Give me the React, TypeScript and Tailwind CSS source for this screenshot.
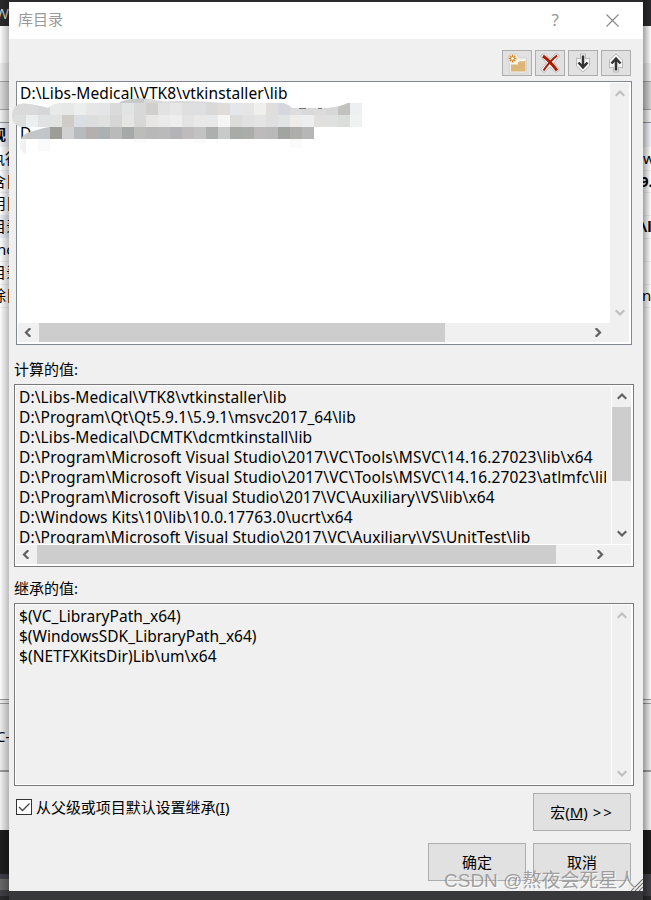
import { ReactNode } from "react";

type Line = { text: string; spacing: string };
type Band = { h: number; bg: string; line?: string; text?: string; bold?: boolean; left?: number; color?: string };

const computedValues: Line[] = [
  { text: "D:\\Libs-Medical\\VTK8\\vtkinstaller\\lib", spacing: "0.12px" },
  { text: "D:\\Program\\Qt\\Qt5.9.1\\5.9.1\\msvc2017_64\\lib", spacing: "0.07px" },
  { text: "D:\\Libs-Medical\\DCMTK\\dcmtkinstall\\lib", spacing: "0.12px" },
  { text: "D:\\Program\\Microsoft Visual Studio\\2017\\VC\\Tools\\MSVC\\14.16.27023\\lib\\x64", spacing: "0.155px" },
  { text: "D:\\Program\\Microsoft Visual Studio\\2017\\VC\\Tools\\MSVC\\14.16.27023\\atlmfc\\lib", spacing: "0.155px" },
  { text: "D:\\Program\\Microsoft Visual Studio\\2017\\VC\\Auxiliary\\VS\\lib\\x64", spacing: "0.09px" },
  { text: "D:\\Windows Kits\\10\\lib\\10.0.17763.0\\ucrt\\x64", spacing: "0.1px" },
  { text: "D:\\Program\\Microsoft Visual Studio\\2017\\VC\\Auxiliary\\VS\\UnitTest\\lib", spacing: "0.11px" },
];

const inheritedValues: Line[] = [
  { text: "$(VC_LibraryPath_x64)", spacing: "0.04px" },
  { text: "$(WindowsSDK_LibraryPath_x64)", spacing: "0px" },
  { text: "$(NETFXKitsDir)Lib\\um\\x64", spacing: "0.07px" },
];

const leftBands: Band[] = [
  { h: 26, bg: "#2b2b2d", text: "W", left: -5, color: "#d0d0d0" },
  { h: 37, bg: "#fbfbfb" },
  { h: 18, bg: "#ececec" },
  { h: 28, bg: "#dcdcdc", line: "#a5a5a5" },
  { h: 13, bg: "#f0f0f0", line: "#a5a5a5" },
  { h: 25, bg: "#eef0f6", line: "#8f959e", text: "观", bold: true, left: -9 },
  { h: 23, bg: "#fcfcfd", text: "执行", left: -10 },
  { h: 22, bg: "#fcfcfd", line: "#ededf2", text: "含目", left: -9 },
  { h: 23, bg: "#fcfcfd", line: "#ededf2", text: "用目", left: -9 },
  { h: 23, bg: "#e9ecf3", text: "目录", left: -9 },
  { h: 23, bg: "#fcfcfd", text: "nc", left: -3 },
  { h: 23, bg: "#fcfcfd", line: "#ededf2", text: "目录", left: -9 },
  { h: 23, bg: "#fcfcfd", line: "#ededf2", text: "除目", left: -9 },
  { h: 392, bg: "#fcfcfc", line: "#ededf2" },
  { h: 4, bg: "#f0f0f0", line: "#9c9c9c" },
  { h: 67, bg: "#ececec", line: "#9c9c9c", text: "C-", left: -4 },
  { h: 2, bg: "#9c9c9c" },
  { h: 58, bg: "#f0f0f0" },
  { h: 44, bg: "#1e1e1e" },
  { h: 5, bg: "#3f3f46" },
  { h: 11, bg: "#686868" },
  { h: 6, bg: "#3f3f46" },
  { h: 4, bg: "#2b2b2d" },
];

const rightBands: Band[] = [
  { h: 26, bg: "#2b2b2d" },
  { h: 37, bg: "#fbfbfb" },
  { h: 18, bg: "#ececec" },
  { h: 28, bg: "#d2d2d2", line: "#a5a5a5" },
  { h: 13, bg: "#f0f0f0", line: "#a5a5a5" },
  { h: 25, bg: "#eef0f6", line: "#8f959e" },
  { h: 23, bg: "#fcfcfd", text: "w", left: 0 },
  { h: 22, bg: "#fcfcfd", line: "#ededf2", text: "9.", bold: true, left: -3 },
  { h: 23, bg: "#fcfcfd", line: "#ededf2" },
  { h: 23, bg: "#fcfcfd", line: "#ededf2", text: "\\li", bold: true, left: -2 },
  { h: 23, bg: "#fcfcfd", line: "#ededf2" },
  { h: 23, bg: "#fcfcfd", line: "#ededf2" },
  { h: 23, bg: "#fcfcfd", line: "#ededf2", text: "n", left: -1 },
  { h: 392, bg: "#fcfcfc", line: "#ededf2" },
  { h: 4, bg: "#f0f0f0", line: "#9c9c9c" },
  { h: 67, bg: "#ececec", line: "#9c9c9c" },
  { h: 2, bg: "#9c9c9c" },
  { h: 58, bg: "#f0f0f0" },
  { h: 44, bg: "#1e1e1e" },
  { h: 22, bg: "#3f3f46" },
  { h: 4, bg: "#2b2b2d" },
];

function Strip(props: { bands: Band[]; shade: string }) {
  return (
    <div className="relative h-[900px] overflow-hidden">
      {props.bands.map((b, i) => (
        <div
          key={i}
          className={`flex items-center overflow-hidden whitespace-nowrap text-[15px] leading-none ${b.bold ? "font-bold" : ""}`}
          style={{ height: b.h, background: b.bg, boxShadow: b.line ? `inset 0 1px ${b.line}` : undefined, color: b.color }}
        >
          {b.text && <span style={{ marginLeft: b.left }}>{b.text}</span>}
        </div>
      ))}
      <div className={`absolute inset-0 ${props.shade}`} />
    </div>
  );
}

const chevrons = {
  up: "M0.7 6.800 L5 2.500 L9.300 6.800",
  down: "M0.7 2.200 L5 6.500 L9.300 2.200",
  left: "M7.300 0.2 L3 4.500 L7.300 8.800",
  right: "M2.700 0.2 L7 4.500 L2.700 8.800",
};

function Chevron(props: { dir: keyof typeof chevrons; disabled?: boolean }) {
  return (
    <svg width="10" height="9" viewBox="0 0 10 9" className="shrink-0">
      <path d={chevrons[props.dir]} fill="none" stroke={props.disabled ? "#bfbfbf" : "#606060"} strokeWidth="2.2" />
    </svg>
  );
}

function VScroll(props: { disabled?: boolean; thumb?: boolean }) {
  return (
    <div className="flex w-[19px] shrink-0 flex-col items-center bg-[#f0f0f0]">
      <div className="flex h-[21px] items-center"><Chevron dir="up" disabled={props.disabled} /></div>
      {props.thumb && <div className="h-[74px] w-full bg-[#cdcdcd]" />}
      <div className="mt-auto flex h-[21px] items-center"><Chevron dir="down" disabled={props.disabled} /></div>
    </div>
  );
}

function HScroll(props: { thumb: string; end: string }) {
  return (
    <div className="flex h-[19px] shrink-0 items-center bg-[#f0f0f0]">
      <div className="flex w-[21px] justify-center pr-px"><Chevron dir="left" /></div>
      <div className={`h-full bg-[#cdcdcd] ${props.thumb}`} />
      <div className={`ml-auto ${props.end}`}><Chevron dir="right" /></div>
    </div>
  );
}

function Lines(props: { lines: Line[] }) {
  return (
    <div className="mr-[5px] min-w-0 flex-1 overflow-hidden pt-px pl-[3px]">
      {props.lines.map((l) => (
        <div key={l.text} className="h-5 whitespace-pre text-[15.5px] leading-5" style={{ letterSpacing: l.spacing }}>
          {l.text}
        </div>
      ))}
    </div>
  );
}

function ToolButton(props: { children: ReactNode }) {
  return (
    <button className="flex h-[26px] w-[30px] items-center justify-center border border-[#adadad] bg-[#e1e1e1]">
      {props.children}
    </button>
  );
}

function PushButton(props: { children: ReactNode }) {
  return (
    <button className="flex h-[38px] w-[98px] items-center justify-center border border-[#adadad] bg-[#e1e1e1] pt-px text-[15px]">
      {props.children}
    </button>
  );
}

// 12px blocks, one string per row
const mosaic = [
  { x: 14, y: 103, colors: "dadada dadada d4d6d8 e8e9e9 e6e7e7 eceded e6e6e6 e4e5e6 dadada e2e3e3 d8d8d8 d1cfcd e3e2e2 e6e6e6 dfdfdf dedfe0 d9d9da dfdcda e4e6e9 e5e5e6 efefed dfdedd d5d7dc dddddd d8d8d8 dcdcdc d7d7d7 c2c2c0 eeeff1" },
  { x: 14, y: 115, colors: "dcdede ecefef e0e2e3 e1e2e2 cfcbc6 dbdfe3 dcdddd e0e0e0 d6d6d6 e5e5e3 d8d8d8 e7e6e4 eaeaea eeeeee e3e3e3 e8e8e8 e8e8e8 f5f5f5 dcdddb e1e1e1 e4e4e4 dfdfdf e2e3e5 edeceb edeef0 e2e0df dfe0e0 dbdddb f0f1f1" },
  { x: 26, y: 127, colors: "c4c4c4 c2c5c8 9c9d97 d0d1d0 b8bbbd b4b0af abb0b3 bbbaba a7a9a8 bcbdba b8b8b8 bababa b4b4b6 bfbbbd c2c2c2 acafad c8caca a9aba8 abadab bdbabb b9b9b9 a2a4a1 adadab b5b6b5" },
];

function Mosaic() {
  return (
    <svg className="absolute -top-px left-[-6px]" width="352" height="58" viewBox="11 97 352 58">
      <clipPath id="smear">
        <path d="M12 115 Q13 104 23 103.500 Q34 104 48 108 Q54 103 64 103 L118 103 Q130 97 150 99 L164 101.500 Q190 100 224 103 L282 103 Q288 104 292 108 L328 108 Q340 107 348 103 L362 103 V127 H314 V139 H21 Q23 133 34 131 Q42 128 49 127 H22 Q12 125 12 115Z" />
      </clipPath>
      <path d="M20 146 Q20 138 26 135 V154 Q20 152 20 146Z" fill="#f1f1f1" />
      <path d="M38 139h12v12h-12zM134 139h12v4h-12zM194 139h12v4h-12zM290 139h12v9l-12-1z" fill="#fafafa" />
      <g clipPath="url(#smear)" shapeRendering="crispEdges">
        <rect x="11" y="97" width="339" height="30" fill="#d9d9d9" />
        <rect x="120" y="97" width="24" height="6" fill="#c8c9cb" />
        <rect x="20" y="127" width="7" height="12" fill="#cacaca" />
        {mosaic.map((row) =>
          row.colors.split(" ").map((c, i) => (
            <rect key={`${row.y}-${i}`} x={row.x + i * 12} y={row.y} width="12" height="12" fill={`#${c}`} />
          ))
        )}
      </g>
      <path d="M299 108.500h7M318 108.500h4" stroke="#777" strokeWidth="1" />
    </svg>
  );
}

function App() {
  return (
    <div className="grid h-[900px] w-[651px] grid-cols-[9px_634px_8px] overflow-hidden bg-[#2b2b2d] font-['Noto_Sans','Noto_Sans_CJK_SC',sans-serif] text-[15px] text-black">
      <Strip bands={leftBands} shade="bg-gradient-to-r from-transparent to-black/25" />

      <div className="h-[900px] bg-[#38383b]">
        <div className="h-[2px] bg-[#2b2b2d]" />
        <div className="relative flex h-[889px] flex-col bg-[#f0f0f0]">
          <div className="flex h-[37px] shrink-0 items-center bg-white pb-[2px] pl-[9px] text-[#999]">
            <span>库目录</span>
            <span className="mr-[47px] ml-auto text-[17px]">?</span>
            <svg width="13" height="13" viewBox="0 0 13 13" className="mt-px mr-[24px]">
              <path d="M.5 .5 L12.500 12.500 M12.500 .5 L.5 12.500" stroke="#888" strokeWidth="1.100" />
            </svg>
          </div>

          <div className="mt-[11px] mr-3 flex justify-end gap-[3px]">
            <ToolButton>
              <svg width="22" height="22" viewBox="0 0 22 22">
                <path d="M1.500 7 L3 3 L7 1.500 L11 3 L13 6 L20.500 6 V21 H3.500 V12Z" fill="#f5f2ee" stroke="#c4c4c4" strokeWidth=".6" />
                <path d="M5 12.500 L12 12.500 V10 H13.500 V8.500 H19.500 V19.500 H5Z" fill="#dcb679" />
                <path d="M13.500 8h5v1.200h-5z" fill="#fff" />
                <path d="M6.500 2.500v8M2.500 6.500h8M3.700 3.700l5.600 5.600M9.300 3.700l-5.600 5.600" stroke="#cf8a2c" strokeWidth="1.300" />
                <circle cx="6.500" cy="6.500" r="1.300" fill="#fff" />
              </svg>
            </ToolButton>
            <ToolButton>
              <svg width="22" height="22" viewBox="0 0 22 22">
                <path d="M1.500 4 L5 1.500 L11 7 L17 1.500 L20.500 3.500 L15 11 L20.500 18 L17 20.500 L11 15 L5 20.500 L1.500 17.500 L7.500 11Z" fill="#f5f5f5" stroke="#b5b5b5" strokeWidth=".9" />
                <path d="M4 4 Q11 9 18 18.500" fill="none" stroke="#a81c00" strokeWidth="2.900" />
                <path d="M18 3.500 Q11 9 4.500 18.500" fill="none" stroke="#a81c00" strokeWidth="2.100" />
              </svg>
            </ToolButton>
            <ToolButton>
              <svg width="16" height="20" viewBox="0 0 16 20">
                <path d="M5.500 1h5v5l4-1v8L8 19l-6.500-6V5l4 1z" fill="#f5f5f5" stroke="#aaa" strokeWidth=".8" />
                <path d="M8 2.500v12M3.500 9.500 L8 14.500 L12.500 9.500" fill="none" stroke="#333" strokeWidth="2.500" />
              </svg>
            </ToolButton>
            <ToolButton>
              <svg width="16" height="20" viewBox="0 0 16 20">
                <path d="M5.500 19h5v-5l4 1V7L8 1 1.500 7v8l4-1z" fill="#f5f5f5" stroke="#aaa" strokeWidth=".8" />
                <path d="M8 17.500V5.500M3.500 10.500 L8 5.500 L12.500 10.500" fill="none" stroke="#333" strokeWidth="2.500" />
              </svg>
            </ToolButton>
          </div>

          <div className="relative mt-[5px] ml-[7px] flex h-[264px] w-[616px] shrink-0 flex-col border border-[#828790] bg-white pt-px pr-[2px] pb-[2px] pl-px">
            <div className="flex flex-1">
              <div className="flex-1 pl-[2px] text-[15.5px]">
                <div className="h-5 leading-5 tracking-[0.12px]">D:\Libs-Medical\VTK8\vtkinstaller\lib</div>
                <div className="mt-5 h-5 leading-5">D</div>
              </div>
              <VScroll disabled />
            </div>
            <HScroll thumb="w-[406px]" end="mr-[26px]" />
            <div className="absolute top-[16px] left-0">
              <Mosaic />
            </div>
          </div>

          <div className="mt-[13px] ml-[5px] h-[22px] shrink-0 leading-[22px]">计算的值:</div>

          <div className="mt-[4px] ml-[5px] flex h-[183px] w-[620px] shrink-0 flex-col border border-[#7a7a7a] bg-white pt-px pr-[2px] pb-[2px] pl-px">
            <div className="flex h-[158px] gap-px overflow-hidden">
              <div className="flex min-w-0 flex-1 bg-[#f0f0f0]">
                <Lines lines={computedValues} />
              </div>
              <VScroll thumb />
            </div>
            <div className="mt-px"><HScroll thumb="w-[519px]" end="mr-[26px]" /></div>
          </div>

          <div className="mt-[10px] ml-[5px] h-[22px] shrink-0 leading-[22px]">继承的值:</div>

          <div className="mt-[4px] ml-[5px] flex h-[183px] w-[620px] shrink-0 gap-px border border-[#7a7a7a] bg-white pt-px pr-[2px] pb-px pl-px">
            <div className="flex min-w-0 flex-1 bg-[#f0f0f0]">
              <Lines lines={inheritedValues} />
            </div>
            <VScroll disabled />
          </div>

          <div className="mt-[7px] mr-3 ml-[7px] flex justify-between">
            <label className="flex h-[28px] items-center gap-1">
              <span className="flex h-4 w-4 items-center justify-center border border-[#333] bg-white">
                <svg width="14" height="14" viewBox="0 0 14 14">
                  <path d="M2 7 L5.500 10.500 L12.500 3.500" fill="none" stroke="#444" strokeWidth="1.300" />
                </svg>
              </span>
              <span className="tracking-[-0.05px]">从父级或项目默认设置继承(<u>I</u>)</span>
            </label>
            <PushButton><span className="whitespace-pre">宏(<u>M</u>) <span className="ml-px tracking-[2px]">&gt;&gt;</span></span></PushButton>
          </div>
          <div className="mt-3 mr-3 flex justify-end gap-[7px]">
            <PushButton>确定</PushButton>
            <PushButton>取消</PushButton>
          </div>

          <svg width="12" height="12" viewBox="0 0 12 12" className="absolute right-0 bottom-0">
            <path d="M0 12L12 0M4 12L12 4M8 12L12 8" stroke="#777" strokeWidth="1.200" />
          </svg>
          <div className="absolute bottom-[-3px] left-[435px] whitespace-nowrap font-['Liberation_Sans','Noto_Sans_CJK_SC',sans-serif] text-[19px] leading-[26px] text-[#8a8a8a]/80 [text-shadow:1px_1px_0_#ffffffb0]">
            CSDN @熬夜会死星人
          </div>
        </div>
      </div>

      <Strip bands={rightBands} shade="bg-gradient-to-l from-transparent to-black/35" />
    </div>
  );
}

export default App;
